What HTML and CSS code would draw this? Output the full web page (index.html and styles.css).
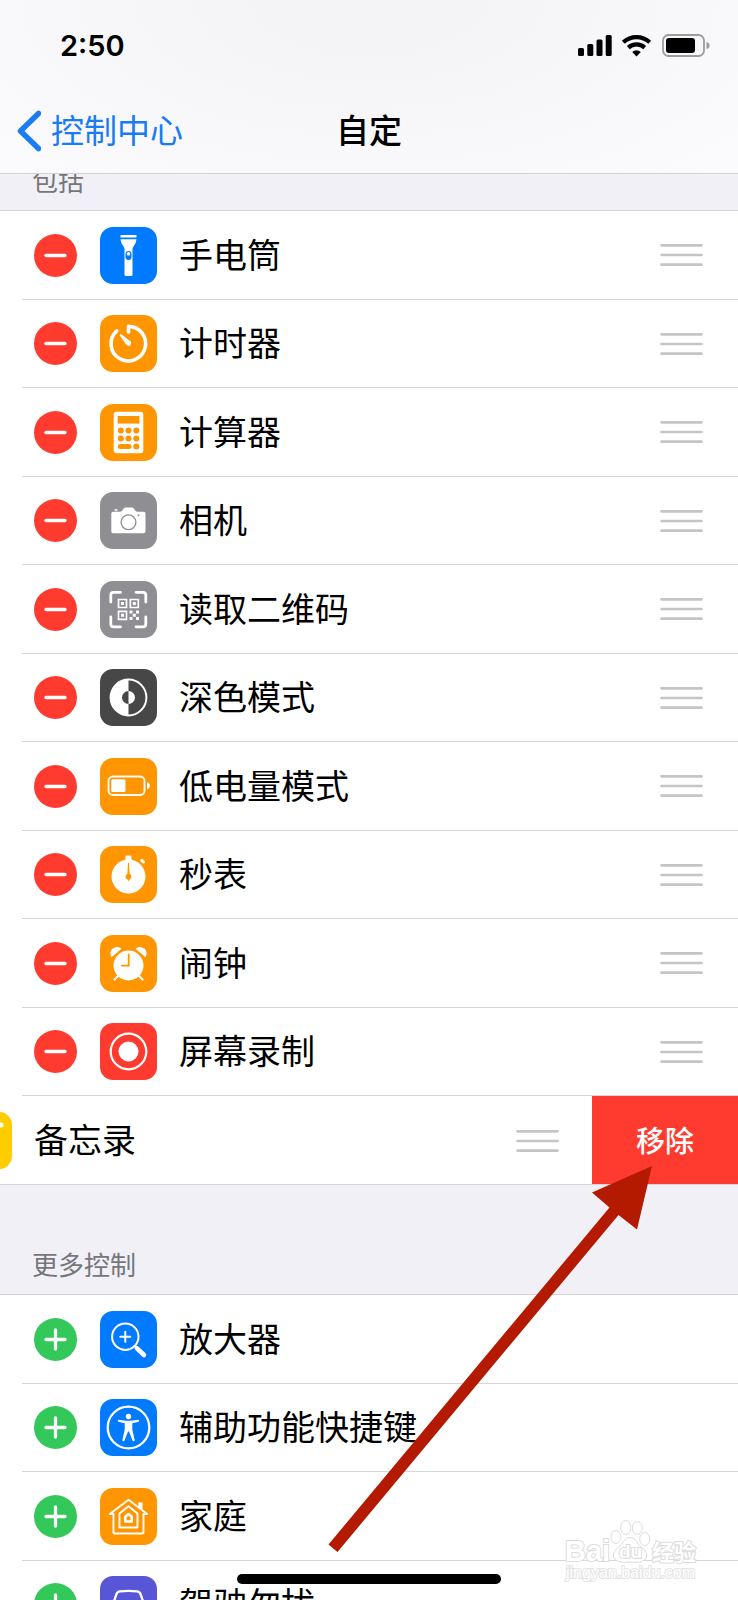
FILE: index.html
```html
<!DOCTYPE html>
<html lang="zh-CN">
<head>
  <meta charset="UTF-8" />
  <meta name="viewport" content="width=device-width, initial-scale=1.0"/>
  <title>自定</title>
  <link rel="stylesheet" href="styles.css">
</head>
<body>
  <!-- shared control glyphs -->
  <svg class="defs" width="0" height="0">
    <symbol id="minus" viewBox="0 0 43 43"><path d="M12 21.5H31" stroke="#fff" stroke-width="3.300" stroke-linecap="round"/></symbol>
    <symbol id="plus" viewBox="0 0 43 43"><path d="M12 21.5H31M21.5 12V31" stroke="#fff" stroke-width="3.300" stroke-linecap="round"/></symbol>
    <symbol id="grip" viewBox="0 0 43 24"><path d="M1.500 2.300H41.500M1.500 12H41.500M1.500 21.700H41.500" stroke="#c5c5c8" stroke-width="2.700" stroke-linecap="round"/></symbol>
  </svg>

  <div class="screen">
    <header class="navbar">
      <div class="status">
        <span class="clock">2:50</span>
        <svg class="status-icons" width="132" height="24" viewBox="0 0 132 24">
          <rect x="0" y="15" width="6" height="8" rx="1.500"/>
          <rect x="9.300" y="11" width="6" height="12" rx="1.500"/>
          <rect x="18.500" y="6.500" width="6" height="16.500" rx="1.500"/>
          <rect x="27.700" y="2" width="6" height="21" rx="1.500"/>
          <g fill="none" stroke="#000" stroke-width="4.200">
            <path d="M45.300 9.300A19.500 19.500 0 0 1 71.700 9.300"/>
            <path d="M50.300 14.600A12.200 12.200 0 0 1 66.700 14.600"/>
          </g>
          <path d="M58.500 23.500L54.200 18.900A6.300 6.300 0 0 1 62.800 18.900Z"/>
          <rect x="85" y="2" width="41" height="21" rx="5.500" fill="none" stroke="#9c9c9e" stroke-width="1.800"/>
          <rect x="88" y="5" width="29" height="15" rx="3"/>
          <path d="M128.500 9Q131.500 9.500 131.500 12.500T128.500 16Z" fill="#9c9c9e"/>
        </svg>
      </div>
      <div class="nav">
        <a class="back" href="#">
          <svg width="25" height="42" viewBox="0 0 25 42"><path d="M22.500 3.500L4.500 21L22.500 38.500" fill="none" stroke="#1a7cf2" stroke-width="5.500" stroke-linecap="round" stroke-linejoin="round"/></svg>
          控制中心
        </a>
        <h1>自定</h1>
      </div>
    </header>

    <main>
      <h2 class="group-title first">包括</h2>
      <ul class="group">
        <li class="row">
          <button class="toggle remove" aria-label="移除手电筒"><svg><use href="#minus"/></svg></button>
          <svg class="icon blue" viewBox="0 0 57 57">
            <path d="M20.500 8H36.500V10.500H20.500ZM20.500 12.200H36.500Q36 17 33.500 19.500Q32.500 20.500 32.500 22V47.500Q32.500 49 31 49H26Q24.500 49 24.500 47.500V22Q24.500 20.500 23.500 19.500Q21 17 20.500 12.200Z"/>
            <rect class="cut" x="25.500" y="24" width="6" height="9" rx="3"/>
            <circle cx="28.500" cy="26.800" r="1.800"/>
          </svg>
          <span class="label">手电筒</span>
          <button class="handle" aria-label="排序"><svg><use href="#grip"/></svg></button>
        </li>
        <li class="row">
          <button class="toggle remove" aria-label="移除计时器"><svg><use href="#minus"/></svg></button>
          <svg class="icon orange" viewBox="0 0 57 57">
            <path class="line" stroke-width="3.600" stroke-linecap="round" stroke-linejoin="round" d="M16.800 15.800A17.300 17.300 0 1 0 28.500 11.400V17"/>
            <path d="M20.300 19.300Q19.400 20.200 20.200 21L26.300 29.800Q28.300 31.800 30.400 30.300Q32.200 28.300 30.600 26.200L21.500 19.500Q20.800 18.900 20.300 19.300Z"/>
          </svg>
          <span class="label">计时器</span>
          <button class="handle" aria-label="排序"><svg><use href="#grip"/></svg></button>
        </li>
        <li class="row">
          <button class="toggle remove" aria-label="移除计算器"><svg><use href="#minus"/></svg></button>
          <svg class="icon orange" viewBox="0 0 57 57">
            <rect x="13.700" y="7.700" width="29.600" height="41.600" rx="3"/>
            <g class="cut">
              <rect x="17.700" y="12" width="21.800" height="7.600"/>
              <circle cx="20.800" cy="26.600" r="3"/><circle cx="28.500" cy="26.600" r="3"/><circle cx="36.300" cy="26.600" r="3"/>
              <circle cx="20.800" cy="34.500" r="3"/><circle cx="28.500" cy="34.500" r="3"/><circle cx="36.300" cy="34.500" r="3"/>
              <rect x="17.800" y="40" width="13.700" height="5" rx="2.500"/><circle cx="36.300" cy="42.500" r="3"/>
            </g>
          </svg>
          <span class="label">计算器</span>
          <button class="handle" aria-label="排序"><svg><use href="#grip"/></svg></button>
        </li>
        <li class="row">
          <button class="toggle remove" aria-label="移除相机"><svg><use href="#minus"/></svg></button>
          <svg class="icon gray" viewBox="0 0 57 57">
            <path d="M13 19.700H20.500Q22 19.500 22.800 17.800Q23.800 15.500 25.500 15.500H32Q33.500 15.500 34.700 17.800Q35.500 19.500 37 19.700H43.700Q45.500 19.700 45.500 21.500V39.500Q45.500 41.300 43.700 41.300H13Q11.300 41.300 11.300 39.500V21.500Q11.300 19.700 13 19.700ZM14.500 17.300H17.500V18.800H14.500Z"/>
            <circle class="cutline" cx="28.500" cy="30.300" r="7.400" stroke-width="1.300"/>
            <circle class="cut" cx="38.500" cy="23.300" r="1"/>
          </svg>
          <span class="label">相机</span>
          <button class="handle" aria-label="排序"><svg><use href="#grip"/></svg></button>
        </li>
        <li class="row">
          <button class="toggle remove" aria-label="移除读取二维码"><svg><use href="#minus"/></svg></button>
          <svg class="icon gray" viewBox="0 0 57 57">
            <path class="line" stroke-width="2.800" stroke-linecap="round" d="M10.800 21V14Q10.800 11.300 13.500 11.300H20.500M36 11.300H43Q45.800 11.300 45.800 14V21M45.800 36V43Q45.800 45.800 43 45.800H36M20.500 45.800H13.500Q10.800 45.800 10.800 43V36"/>
            <path class="line" stroke-width="1.700" d="M18.500 18.500H26.500V26.500H18.500ZM30.300 18.500H38.300V26.500H30.300ZM18.500 30.300H26.500V38.300H18.500Z"/>
            <path d="M21 21H24V24H21ZM32.800 21H35.800V24H32.800ZM21 32.800H24V35.800H21ZM29.500 29.500H32.500V32.500H29.500ZM36 29.500H39V32.500H36ZM32.800 32.800H35.800V35.800H32.800ZM29.500 36H32.500V39H29.500ZM36 36H39V39H36Z"/>
          </svg>
          <span class="label">读取二维码</span>
          <button class="handle" aria-label="排序"><svg><use href="#grip"/></svg></button>
        </li>
        <li class="row">
          <button class="toggle remove" aria-label="移除深色模式"><svg><use href="#minus"/></svg></button>
          <svg class="icon dark" viewBox="0 0 57 57">
            <circle class="line" cx="28.500" cy="28.500" r="17.900" stroke-width="2"/>
            <path d="M28.500 10.600A17.900 17.900 0 0 0 28.500 46.400V35A6.500 6.500 0 0 1 28.500 22ZM28.500 22A6.500 6.500 0 0 1 28.500 35Z"/>
          </svg>
          <span class="label">深色模式</span>
          <button class="handle" aria-label="排序"><svg><use href="#grip"/></svg></button>
        </li>
        <li class="row">
          <button class="toggle remove" aria-label="移除低电量模式"><svg><use href="#minus"/></svg></button>
          <svg class="icon orange" viewBox="0 0 57 57">
            <rect class="line" x="8.500" y="18.500" width="36" height="18.500" rx="4.500" stroke-width="1.900"/>
            <rect x="11.300" y="21.300" width="14.200" height="12.700" rx="1.500"/>
            <path d="M47 24.200Q50 25 50 27.800T47 31.300Z"/>
          </svg>
          <span class="label">低电量模式</span>
          <button class="handle" aria-label="排序"><svg><use href="#grip"/></svg></button>
        </li>
        <li class="row">
          <button class="toggle remove" aria-label="移除秒表"><svg><use href="#minus"/></svg></button>
          <svg class="icon orange" viewBox="0 0 57 57">
            <circle cx="28.500" cy="30.500" r="17"/>
            <rect x="25.500" y="9.500" width="6" height="6" rx="1"/>
            <path class="line" stroke-width="3" stroke-linecap="round" d="M41.700 14.300L43.500 16"/>
            <path class="cut" d="M28 17H29L29.600 27.800Q31.500 29.300 31.500 30.700Q31.500 32.200 29.600 33.300L28.500 35.500L27.400 33.300Q25.500 32.200 25.500 30.700Q25.500 29.300 27.400 27.800Z"/>
          </svg>
          <span class="label">秒表</span>
          <button class="handle" aria-label="排序"><svg><use href="#grip"/></svg></button>
        </li>
        <li class="row">
          <button class="toggle remove" aria-label="移除闹钟"><svg><use href="#minus"/></svg></button>
          <svg class="icon orange" viewBox="0 0 57 57">
            <circle cx="28.500" cy="30.500" r="15"/>
            <path d="M11.500 22.300A6.600 6.600 0 0 1 21.500 13.800ZM45.500 22.300A6.600 6.600 0 0 0 35.500 13.800Z"/>
            <path class="line" stroke-width="2.200" stroke-linecap="round" d="M14.500 44.500L19 40M42.500 44.500L38 40"/>
            <path class="cutline" stroke-width="1.800" stroke-linecap="round" d="M28.700 19.500V30.700H22"/>
          </svg>
          <span class="label">闹钟</span>
          <button class="handle" aria-label="排序"><svg><use href="#grip"/></svg></button>
        </li>
        <li class="row">
          <button class="toggle remove" aria-label="移除屏幕录制"><svg><use href="#minus"/></svg></button>
          <svg class="icon red" viewBox="0 0 57 57">
            <circle class="line" cx="28.500" cy="28.500" r="17.800" stroke-width="2.200"/>
            <circle cx="28.500" cy="28.500" r="10"/>
          </svg>
          <span class="label">屏幕录制</span>
          <button class="handle" aria-label="排序"><svg><use href="#grip"/></svg></button>
        </li>
        <li class="row swiped">
          <svg class="icon yellow" viewBox="0 0 57 57">
            <path class="line" stroke-width="5" stroke-linecap="round" d="M12 13H46"/>
          </svg>
          <span class="label">备忘录</span>
          <button class="handle" aria-label="排序"><svg><use href="#grip"/></svg></button>
          <button class="action">移除</button>
        </li>
      </ul>

      <h2 class="group-title">更多控制</h2>
      <ul class="group">
        <li class="row">
          <button class="toggle add" aria-label="添加放大器"><svg><use href="#plus"/></svg></button>
          <svg class="icon blue" viewBox="0 0 57 57">
            <circle class="line" cx="25.300" cy="25.700" r="13.200" stroke-width="2"/>
            <path class="line" stroke-width="2" stroke-linecap="round" d="M20.300 25.700H30.300M25.300 20.700V30.700M34.700 35L37 37.300"/>
            <path class="line" stroke-width="4.600" stroke-linecap="round" d="M37 37.300L44 44"/>
          </svg>
          <span class="label">放大器</span>
        </li>
        <li class="row">
          <button class="toggle add" aria-label="添加辅助功能快捷键"><svg><use href="#plus"/></svg></button>
          <svg class="icon blue" viewBox="0 0 57 57">
            <circle class="line" cx="28.500" cy="28.500" r="20.800" stroke-width="2.300"/>
            <circle cx="28.500" cy="17.500" r="2.700"/>
            <path d="M18.500 20.700L26 21.800H31L38.500 20.700Q40 21.700 38.700 22.800L32.300 24.300V30.500L34.700 41.300Q34 43 32.700 41.900L29 32.500H28L24.300 41.900Q23 43 22.300 41.300L24.700 30.500V24.300L18.300 22.800Q17 21.700 18.500 20.700Z"/>
          </svg>
          <span class="label">辅助功能快捷键</span>
        </li>
        <li class="row">
          <button class="toggle add" aria-label="添加家庭"><svg><use href="#plus"/></svg></button>
          <svg class="icon orange" viewBox="0 0 57 57">
            <g class="line" stroke-width="1.900" stroke-linejoin="round">
              <path d="M13.500 26H9.800L28.500 11.700L47.200 26H43.500V44.500Q43.500 45.500 42.500 45.500H14.500Q13.500 45.500 13.500 44.500Z"/>
              <path d="M19.500 25.500L28.500 18.300L37.500 25.500V39.500H19.500Z"/>
              <path stroke-width="2.600" d="M25.300 28.800L28.500 26L31.700 28.800V33.500H25.300Z"/>
            </g>
            <path d="M38.300 14.500H42.500V22.500L38.300 19.300Z"/>
          </svg>
          <span class="label">家庭</span>
        </li>
        <li class="row">
          <button class="toggle add" aria-label="添加驾驶勿扰"><svg><use href="#plus"/></svg></button>
          <svg class="icon purple" viewBox="0 0 57 57">
            <path class="line" stroke-width="2.300" d="M13 28L16.500 18Q17.500 15.500 20 15.300Q28.500 14.500 37 15.300Q39.500 15.500 40.500 18L44 28V40H13Z"/>
          </svg>
          <span class="label">驾驶勿扰</span>
        </li>
      </ul>
    </main>

    <svg class="watermark" width="140" height="70" viewBox="0 0 140 70">
      <g class="paw">
        <ellipse cx="56" cy="23" rx="5" ry="6.500"/>
        <ellipse cx="65.700" cy="13.500" rx="5" ry="7"/>
        <ellipse cx="77.300" cy="14" rx="5" ry="6.500"/>
        <ellipse cx="84.700" cy="25" rx="5" ry="6.500"/>
        <path d="M70 23.500Q75 23.500 79 31Q88 37 86.500 43Q84 50 70 48Q56 50 53.500 43Q52 37 61 31Q65 23.500 70 23.500Z"/>
      </g>
      <text class="wm-bai" x="5" y="47">Bai</text>
      <text class="wm-du" x="59" y="44">du</text>
      <text class="wm-cn" x="92" y="46">经验</text>
      <text class="wm-url" x="6" y="64">jingyan.baidu.com</text>
    </svg>
    <svg class="arrow" width="324" height="387" viewBox="0 0 324 387">
      <path d="M324 0L309 63.500L290.500 49L9.500 386L0.500 378.500L281.500 41.500L264 26.500Z"/>
    </svg>
    <div class="home-bar"></div>
  </div>
</body>
</html>
```
FILE: styles.css
```css
* { box-sizing: border-box; }
body {
  margin: 0;
  font-family: Inter, "Noto Sans CJK SC", sans-serif;
  color: #000;
  background: #f1f0f6;
}
h1, h2, ul { margin: 0; padding: 0; }
ul { list-style: none; }
button {
  border: 0;
  padding: 0;
  background: none;
  font-family: inherit;
}
.defs { position: absolute; }
.screen {
  position: relative;
  height: 100vh;
  overflow: hidden;
}

/* top bar */
.navbar {
  background: radial-gradient(ellipse at 50% 0, #f3f3f5 0%, #f7f7f9 50%, #fbfbfd 100%);
  border-bottom: 1px solid #d2d2d5;
}
.status {
  display: flex;
  justify-content: space-between;
  align-items: center;
  height: 90px;
  padding: 0 28px 0 60px;
}
.clock {
  font-size: 29px;
  font-weight: 600;
}
.nav {
  display: grid;
  grid-template-columns: 1fr auto 1fr;
  align-items: center;
  height: 83px;
  padding: 0 16px 2px;
}
.back {
  display: flex;
  align-items: center;
  gap: 10px;
  font-size: 33px;
  line-height: 42px;
  color: #1a7cf2;
  text-decoration: none;
}
.nav h1 {
  font-size: 33px;
  font-weight: 500;
  line-height: 42px;
}

/* lists */
.group-title {
  display: flex;
  align-items: flex-end;
  height: 109px;
  padding: 0 32px 15px;
  overflow: hidden;
  font-size: 26px;
  font-weight: 400;
  line-height: 26px;
  color: #76767b;
}
.group-title.first { height: 36px; }
.group {
  background: #fff;
  border-top: 1px solid #d2d2d5;
}
.row {
  position: relative;
  display: flex;
  align-items: center;
  height: 89px;
  padding: 0 35px 1px 34px;
}
.row:nth-child(even) { height: 88px; }
.row::after {
  content: "";
  position: absolute;
  left: 22px;
  right: 0;
  bottom: 0;
  border-bottom: 1px solid #d6d6d9;
}
.toggle {
  width: 43px;
  height: 43px;
  margin-right: 23px;
  border-radius: 50%;
}
.toggle svg {
  display: block;
  width: 43px;
  height: 43px;
}
.remove { background: #ff3b30; }
.add { background: #34c759; }
.label {
  flex: 1;
  margin-left: 22px;
  padding-top: 1px;
  font-size: 34px;
  line-height: 42px;
}
.handle, .handle svg {
  display: block;
  width: 43px;
  height: 24px;
}

/* app icons */
.icon {
  flex: none;
  width: 57px;
  height: 57px;
  border-radius: 13px;
  background: var(--tint);
  fill: #fff;
}
.line { fill: none; stroke: #fff; }
.cut { fill: var(--tint); }
.cutline { fill: none; stroke: var(--tint); }
.blue { --tint: #007aff; }
.orange { --tint: #ff9500; }
.gray { --tint: #8e8e93; }
.dark { --tint: #474747; }
.red { --tint: #ff3b30; }
.yellow { --tint: #ffcc00; }
.purple { --tint: #5856d6; }

/* row pulled left to show its action */
.swiped {
  padding: 0;
  overflow: hidden;
}
.swiped::after { left: 0; }
.swiped .icon { margin-left: -45px; }
.swiped .handle { margin-right: 33px; }
.action {
  align-self: stretch;
  width: 146px;
  padding-bottom: 3px;
  background: #ff3b30;
  color: #fff;
  font-size: 29px;
  font-weight: 500;
}

/* overlays */
.arrow {
  position: absolute;
  left: 328px;
  top: 1166px;
  fill: #b31a00;
}
.home-bar {
  position: absolute;
  left: 50%;
  bottom: 16px;
  width: 264px;
  height: 10px;
  margin-left: -132px;
  border-radius: 5px;
  background: #000;
}
.watermark {
  position: absolute;
  right: 38px;
  bottom: 16px;
  fill: #fff;
  stroke: #dcdcdc;
  stroke-width: 1px;
}
.watermark text { paint-order: stroke; stroke-width: 2px; }
.wm-bai { font: 700 29px "Liberation Sans", sans-serif; }
.wm-du { font: 700 19px "Liberation Sans", sans-serif; }
.wm-cn { font: 700 22px "Noto Sans CJK SC", sans-serif; }
.wm-url { font: 400 16px "Liberation Sans", sans-serif; stroke: #e4e4e4; }
```
